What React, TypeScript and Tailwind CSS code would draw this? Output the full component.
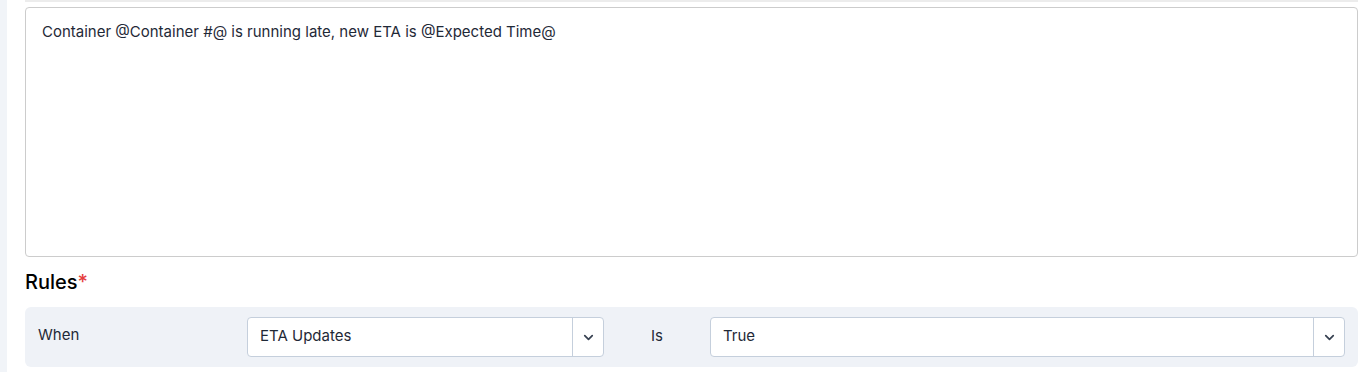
import { ChevronDown } from "lucide-react";

const Select = ({ value, className }: { value: string; className?: string }) => {
  return (
    <div
      className={`flex h-10 items-stretch rounded-[4px] border border-[#c5cfdc] bg-white ${className ?? ""}`}
    >
      <div className="flex flex-1 items-center px-3 pb-[2px] text-[15px] text-[#1f2937]">{value}</div>
      <div className="flex w-[31px] items-center justify-center border-l border-[#c5cfdc] text-[#374151]">
        <ChevronDown size={15} strokeWidth={2.75} />
      </div>
    </div>
  );
};

export default function App() {
  return (
    <div
      className="flex min-h-[372px] bg-white"
      style={{ fontFamily: "Inter, 'Liberation Sans', sans-serif" }}
    >
      {/* side strip */}
      <div className="w-[7px] bg-[#f1f4f8]" />

      <div className="flex-1 pl-[18px] pr-[12px]">
        <div className="h-[2px] bg-[#ececec]" />

        {/* ================= MESSAGE ================= */}
        <div className="mt-[5px] h-[250px] rounded-[4px] border border-[#cccccc] px-4 pt-[14px] text-[15px] leading-5 text-[#1f2937]">
          Container @Container #@ is running late, new ETA is @Expected Time@
        </div>

        {/* ================= RULES ================= */}
        <h3 className="mt-[13px] text-[20px] font-medium leading-6 text-black">
          Rules<span className="text-[#e53e3e]">*</span>
        </h3>

        <div className="mt-[13px] flex h-[60px] items-center rounded-md bg-[#eff2f7] pl-[13px] pr-[13px]">
          <div className="w-[209px] pb-[4px] text-[15px] text-[#1f2937]">When</div>
          <Select value="ETA Updates" className="w-[357px]" />
          <div className="w-[106px] pb-[2px] pl-[47px] text-[15px] text-[#1f2937]">Is</div>
          <Select value="True" className="flex-1" />
        </div>
      </div>
    </div>
  );
}
